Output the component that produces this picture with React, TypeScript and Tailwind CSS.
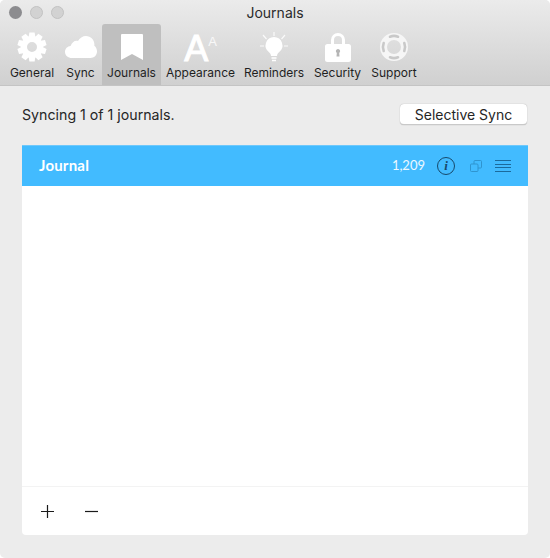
import type { ReactNode } from "react";

const font = { sf: "font-['Inter','Liberation_Sans',sans-serif]" };

const Gear = () => {
  const teeth = [0, 36, 72, 108, 144, 180, 216, 252, 288, 324];
  return (
    <svg width="30" height="30" viewBox="0 0 30 30">
      {teeth.map((a) => (
        <path key={a} d="M12.400 .5h5.200l1 6h-7.200z" fill="#fff" transform={`rotate(${a} 15 15)`} />
      ))}
      <circle cx="15" cy="15" r="8" fill="none" stroke="#fff" strokeWidth="6" />
    </svg>
  );
};

const Cloud = () => (
  <svg width="32" height="22" viewBox="0 0 32 22">
    <path
      d="M7 22C3 22 0 19.4 0 16c0-3.200 2.400-5.600 5.600-5.900C7 6 10 4 13 5c1.600-3 4.600-5 8-5 4.800 0 8.400 3.600 8.400 8.600 0 .4 0 .8-.1 1.200C31 11 32 13.200 32 15.600 32 19.400 29 22 25.400 22H7z"
      fill="#fff"
    />
  </svg>
);

const Bookmark = () => (
  <svg width="22" height="26" viewBox="0 0 22 26">
    <path d="M1 0h20a1 1 0 0 1 1 1v25l-11-6-11 6V1a1 1 0 0 1 1-1z" fill="#fff" />
  </svg>
);

const Bulb = () => (
  <svg width="30" height="30" viewBox="0 0 30 30">
    <g stroke="#fff" strokeWidth="1.200" opacity="0.85">
      <path d="M15 0v4M4 3l3.500 4M26 3l-3.500 4M1 14h4M25 14h4" />
    </g>
    <path d="M15 5a8.500 8.500 0 0 0-5 15.300c1.200 1 1.800 2 2 3.700h6c.2-1.700.8-2.700 2-3.700A8.500 8.500 0 0 0 15 5z" fill="#fff" />
    <path d="M12.500 26h5M13 28.500h4" stroke="#fff" strokeWidth="1.500" />
  </svg>
);

const Lock = () => (
  <svg width="26" height="30" viewBox="0 0 26 30">
    <path
      fillRule="evenodd"
      d="M6 12V8a7 7 0 0 1 14 0v4h3.500A2.500 2.500 0 0 1 26 14.500v13a2.500 2.500 0 0 1-2.500 2.500h-21A2.500 2.500 0 0 1 0 27.500v-13A2.500 2.500 0 0 1 2.500 12H6zm3 0h8V8a4 4 0 0 0-8 0v4z"
      fill="#fff"
    />
    <path d="M13 17a2.200 2.200 0 0 0-1.200 4l-.3 3.500h3l-.3-3.500A2.200 2.200 0 0 0 13 17z" fill="#b5b5b5" />
  </svg>
);

const Lifebuoy = () => (
  <svg width="30" height="30" viewBox="0 0 30 30">
    <circle cx="15" cy="15" r="10.500" fill="none" stroke="#f6f6f6" strokeWidth="7" />
    <g fill="none" stroke="#c9c9c9" strokeWidth="2.600" strokeLinecap="round">
      <path d="M11 4.700a11 11 0 0 1 8 0" />
      <path d="M25.300 11a11 11 0 0 1 0 8" />
      <path d="M19 25.300a11 11 0 0 1-8 0" />
      <path d="M4.700 19a11 11 0 0 1 0-8" />
    </g>
  </svg>
);

const Fonts = () => (
  <div className="flex h-[30px] items-start justify-center text-white">
    <span className="font-['Liberation_Sans',sans-serif] text-[36px] leading-[33px] [-webkit-text-stroke:1px_white]">A</span>
    <span className="pt-[2px] font-['Liberation_Sans',sans-serif] text-[13px] leading-[15px] text-white/80">A</span>
  </div>
);

type Tab = { label: string; width: string; icon: ReactNode; active?: boolean };

const tabs: Tab[] = [
  { label: "General", width: "w-[56px]", icon: <Gear /> },
  { label: "Sync", width: "w-[41px]", icon: <Cloud /> },
  { label: "Journals", width: "w-[59px] ml-px", icon: <Bookmark />, active: true },
  { label: "Appearance", width: "w-[79px]", icon: <Fonts /> },
  { label: "Reminders", width: "w-[68px]", icon: <Bulb /> },
  { label: "Security", width: "w-[59px]", icon: <Lock /> },
  { label: "Support", width: "w-[54px]", icon: <Lifebuoy /> },
];

export default function App() {
  return (
    <div className={`h-[558px] w-[550px] overflow-hidden rounded-[5px] bg-[#ececec] text-[#222] ${font.sf}`}>
      <header className="h-[86px] border-b border-[#c4c4c4] bg-gradient-to-b from-[#ebebeb] to-[#d0d0d0]">
        <div className="relative h-[24px]">
          <div className="absolute top-[6px] left-[9px] flex gap-[8px]">
            <span className="h-[13px] w-[13px] rounded-full bg-[#8c8c8f]" />
            <span className="h-[13px] w-[13px] rounded-full border border-[#c2c2c2] bg-[#d2d2d2]" />
            <span className="h-[13px] w-[13px] rounded-full border border-[#c2c2c2] bg-[#d2d2d2]" />
          </div>
          <p className="pt-[5px] text-center text-[14px] leading-[16px] text-[#2b2b2b]">Journals</p>
        </div>
        <nav className="flex pl-[4px]">
          {tabs.map((tab) => (
            <div
              key={tab.label}
              className={`flex h-[61px] flex-col items-center rounded-t-[3px] ${tab.width} ${tab.active ? "bg-[#bfbfbf]" : ""}`}
            >
              <div className="flex h-[41px] items-center justify-center pt-[4px]">{tab.icon}</div>
              <span className="text-[12px] leading-[15px] whitespace-nowrap text-[#1f1f1f]">{tab.label}</span>
            </div>
          ))}
        </nav>
      </header>

      <main className="px-[22px]">
        <div className="flex h-[59px] items-center justify-between pb-[2px]">
          <p className="text-[14.200px] text-[#262626]">Syncing 1 of 1 journals.</p>
          <button className="mr-px flex h-[21px] w-[127px] items-center justify-center rounded-[4px] border-b border-[#c9c9c9] bg-white text-[14px] text-[#262626] shadow-[0_0_1px_rgba(0,0,0,0.35)]">
            Selective Sync
          </button>
        </div>

        <section className="flex h-[390px] flex-col rounded-b-[4px] bg-white">
          <div className="flex h-[41px] items-center border-t border-[#6ec8fb] bg-[#42bbff] pr-[17px] pb-[1px] pl-[17px] text-white">
            <span className="font-['Lato',sans-serif] text-[15px] font-bold tracking-[0.2px]">Journal</span>
            <span className="ml-auto font-['Lato',sans-serif] text-[13px] text-white/90">1,209</span>
            <span className="ml-[12px] flex h-[18px] w-[18px] items-center justify-center rounded-full border-[1.500px] border-[#17496b] font-['Liberation_Serif',serif] text-[13px] font-bold text-[#17496b] italic">
              i
            </span>
            <svg className="ml-[15px]" width="12" height="12" viewBox="0 0 12 12" fill="none" stroke="#2f94cf">
              <rect x="4" y="0.500" width="7.500" height="7.500" rx="1" />
              <rect x="0.500" y="4" width="7.500" height="7.500" rx="1" fill="#42bbff" />
            </svg>
            <svg className="ml-[13px]" width="16" height="12" viewBox="0 0 16 12" stroke="#1b6a9c">
              <path d="M0 .5h16M0 4.500h16M0 7.500h16M0 11.500h16" />
            </svg>
          </div>

          <div className="flex-1" />

          <div className="flex h-[49px] items-center gap-[31px] border-t border-[#f3f3f3] pl-[19px]">
            <svg width="13" height="13" viewBox="0 0 13 13" stroke="#1a1a1a" strokeWidth="1.200">
              <path d="M6.500 0v13M0 6.500h13" />
            </svg>
            <svg width="13" height="13" viewBox="0 0 13 13" stroke="#1a1a1a" strokeWidth="1.200">
              <path d="M0 6.500h13" />
            </svg>
          </div>
        </section>
      </main>
    </div>
  );
}
